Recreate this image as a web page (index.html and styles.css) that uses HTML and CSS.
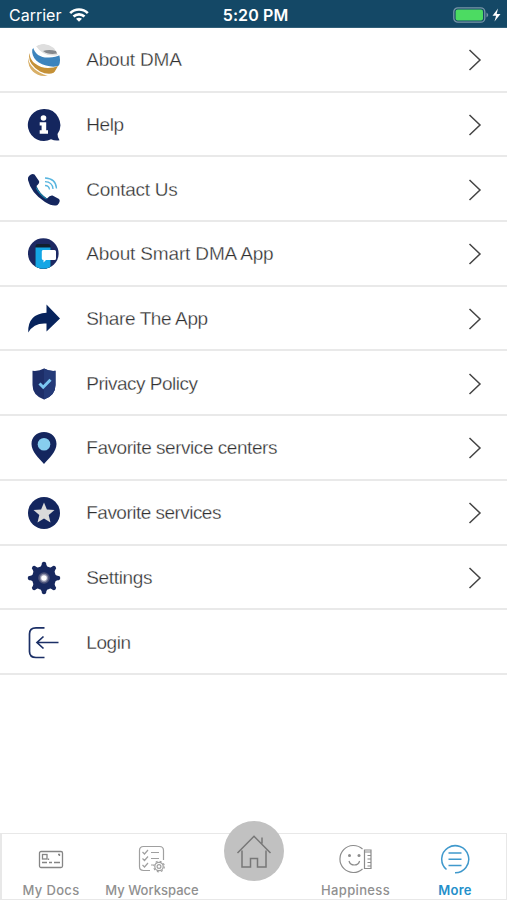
FILE: index.html
```html
<!DOCTYPE html>
<html lang="en">
<head>
<meta charset="utf-8">
<title>More</title>
<link rel="stylesheet" href="styles.css">
</head>
<body>
<svg class="defs" width="0" height="0" aria-hidden="true"><symbol id="chev" viewBox="0 0 14 22"><path d="M1.500 1 12 11 1.500 21" fill="none" stroke="#444" stroke-width="1.500"/></symbol></svg>
<div class="app">
  <header class="status">
    <div class="carrier"><span>Carrier</span>
      <svg width="20" height="14" viewBox="0 0 20 14" fill="none" stroke="#fff" stroke-width="2.700"><path d="M1.200 5.100C6.200.3 13.800.3 18.800 5.100M4.500 8.500C7.600 5.600 12.400 5.600 15.500 8.500"/><path d="M7 10.800Q10 8.600 13 10.800L10 13.700Z" fill="#fff" stroke="none"/></svg>
    </div>
    <div class="time">5:20 PM</div>
    <svg class="battery" width="49" height="16" viewBox="0 0 49 16"><rect x=".8" y=".8" width="31" height="14.400" rx="4" fill="none" stroke="#7896a8" stroke-width="1.300"/><rect x="2.600" y="2.600" width="27.400" height="10.800" rx="2" fill="#4cdb62"/><path d="M33.500 5.500Q37 8 33.500 10.500Z" fill="#7896a8"/><path d="M45 1.500 39.500 8.800h3.600L41.500 14.500 47.500 6.900h-3.800Z" fill="#fff"/></svg>
  </header>
  <main class="menu">
    <div class="row">
      <svg class="icon" viewBox="0 0 34 34"><defs><clipPath id="globe"><circle cx="17" cy="17" r="16"/></clipPath></defs><g clip-path="url(#globe)"><path d="M9 3Q17-2 27 5L31 12Q17 15 9 3Z" fill="#dedede"/><path d="M16 8Q22 6 29 8L30 10.500Q21 12 16 8Z" fill="#85888d"/><path d="M6 3C7 12 15 15 22 14.500Q29 14 33 12L33 22Q28 25 19 22.500C8 19.500 3 12 6 3Z" fill="#3d84bd"/><path d="M3 9Q2 16 8 20.500 14 25 21 25 27 25 31 23L27 30Q20 32 13 28.500-1 20 3 9Z" fill="#c59137"/><path d="M1 15Q3 27 21 33L14 34Q0 30 1 15Z" fill="#d9b068"/></g></svg>
      <span class="label l1">About DMA</span><svg class="chev"><use href="#chev"/></svg>
    </div>
    <div class="row">
      <svg class="icon" viewBox="0 0 34 34"><path d="M17 1A16 16 0 1 0 24 31.300Q28 33 32.500 32.300 30.500 29.500 30.500 26A16 16 0 0 0 17 1Z" fill="#14265e"/><circle cx="16.500" cy="10" r="2.800" fill="#fff"/><path d="M12.700 14.300H19.200V22.300H21V25.700H12.700V22.300H14.600V17.500H12.700Z" fill="#fff"/></svg>
      <span class="label l2">Help</span><svg class="chev"><use href="#chev"/></svg>
    </div>
    <div class="row">
      <svg class="icon" viewBox="0 0 34 34"><path d="M2 3Q5 0 7.500 1.500L12 8Q13 10 9.500 13 12 20 20 25.500 23 22 25.500 22.500L32 26Q34 28 30.500 32 26 34 18 29 4 20 1 7 .5 4.500 2 3Z" fill="#14265e"/><path d="M9.200 14.500Q12 21 19.500 26" fill="none" stroke="#1680a5" stroke-width="1.200"/><g fill="none" stroke="#58b5df" stroke-width="1.300"><path d="M18 12.500Q22 12.500 22.500 16.500"/><path d="M18 8.700Q25.500 9 26 16"/><path d="M18 5Q29 5.500 29.500 15.500"/></g></svg>
      <span class="label l3">Contact Us</span><svg class="chev"><use href="#chev"/></svg>
    </div>
    <div class="row">
      <svg class="icon" viewBox="0 0 34 34"><defs><clipPath id="app"><circle cx="16.300" cy="16.500" r="15.300"/></clipPath></defs><g clip-path="url(#app)"><path d="M0 0H34V34H0Z" fill="#1c2963"/><path d="M8.500 9Q8.500 7 11 7H21Q23.500 7 23.500 9V34H8.500Z" fill="#11202e"/><path d="M8.500 10.500H23.500V34H8.500Z" fill="#14a6e5"/></g><path d="M16 13H27.500Q29 13 29 14.500V21.500Q29 23 27.500 23H19L16.500 25.500V23Q14.800 23 14.800 21.500V14.500Q14.800 13 16 13Z" fill="#fff"/></svg>
      <span class="label l4">About Smart DMA App</span><svg class="chev"><use href="#chev"/></svg>
    </div>
    <div class="row">
      <svg class="icon" viewBox="0 0 34 34"><path d="M1.200 30.500Q.5 12 19.500 10.800V2.500L33 16.500 19.500 29.500V21.500Q7 20.500 1.200 30.500Z" fill="#07235c"/></svg>
      <span class="label l5">Share The App</span><svg class="chev"><use href="#chev"/></svg>
    </div>
    <div class="row">
      <svg class="icon" viewBox="0 0 34 34"><path d="M17 1.500Q22 4.500 28.500 3.800V18Q28.500 28.500 17 32.500 5.500 28.500 5.500 18V3.800Q12 4.500 17 1.500Z" fill="#1d2e69"/><path d="M17 1.500Q22 4.500 28.500 3.800V18Q28.500 28.500 17 32.500Z" fill="#243a78"/><path d="M12.500 16.500 16.200 20.200 23.500 12.800" fill="none" stroke="#7cc8f3" stroke-width="3"/></svg>
      <span class="label l6">Privacy Policy</span><svg class="chev"><use href="#chev"/></svg>
    </div>
    <div class="row">
      <svg class="icon" viewBox="0 0 34 34"><path d="M17 1C9.500 1 4.500 6.200 4.500 13 4.500 20.500 12 27.500 17 33 22 27.500 29.500 20.500 29.500 13 29.500 6.200 24.500 1 17 1Z" fill="#14265e"/><circle cx="17" cy="13.300" r="6.300" fill="#87ceef"/></svg>
      <span class="label l7">Favorite service centers</span><svg class="chev"><use href="#chev"/></svg>
    </div>
    <div class="row">
      <svg class="icon" viewBox="0 0 34 34"><circle cx="17" cy="17" r="16" fill="#14265e"/><path d="M17 6.500 19.900 13.500 27.500 14.100 21.700 19 23.500 26.400 17 22.400 10.500 26.400 12.300 19 6.500 14.100 14.100 13.500Z" fill="#dadada"/></svg>
      <span class="label l8">Favorite services</span><svg class="chev"><use href="#chev"/></svg>
    </div>
    <div class="row">
      <svg class="icon" viewBox="0 0 34 34"><circle cx="17" cy="17" r="12" fill="#17285f"/><g fill="#17285f"><path id="teeth" d="M11 8Q14.500 6 14.700 3.500 14.700.8 17 .8T19.300 3.500Q19.500 6 23 8ZM11 26Q14.500 28 14.700 30.500 14.700 33.200 17 33.200T19.300 30.500Q19.500 28 23 26Z"/><use href="#teeth" transform="rotate(45 17 17)"/><use href="#teeth" transform="rotate(90 17 17)"/><use href="#teeth" transform="rotate(135 17 17)"/></g><circle cx="17" cy="17" r="5.800" fill="#4b5279"/><circle cx="17" cy="17" r="4.200" fill="#8e91ab"/><circle cx="17" cy="17" r="2.800" fill="#fff"/></svg>
      <span class="label l9">Settings</span><svg class="chev"><use href="#chev"/></svg>
    </div>
    <div class="row">
      <svg class="icon" viewBox="0 0 34 34" fill="none" stroke="#1b2f66" stroke-width="1.700"><path d="M17.500 1.800H9Q2.500 1.800 2.500 8V25.500Q2.500 31.500 9 31.500H17.500M31.500 16.500H10.500M16.500 10.500 10 16.500 16.500 22.500"/></svg>
      <span class="label l10">Login</span>
    </div>
  </main>
  <nav class="tabs">
    <div class="tab docs">
      <svg width="30" height="30" viewBox="0 0 30 30" fill="none" stroke="#858585" stroke-width="1.300"><rect x="3.500" y="7.500" width="23" height="16" rx="1.500"/><rect x="6.500" y="10.500" width="4.500" height="4.500"/><path d="M6 18.500H11M13 18.500H16M18 18.500H24M12.500 14.500V16M22 10.500H23.500V12"/></svg>
      <span>My Docs</span>
    </div>
    <div class="tab work">
      <svg width="30" height="30" viewBox="0 0 30 30" fill="none" stroke="#a0a0a0" stroke-width="1.200"><path d="M13 26.500H6.500Q2.500 26.500 2.500 22.500V6.500Q2.500 2.500 6.500 2.500H22.500Q26.500 2.500 26.500 6.500V16M5.500 8 7.500 10 11 6M5.500 14.500 7.500 16.500 11 12.500M5.500 21 7.500 23 11 19M14 8.500H22M14 14.500H22M14 21H16"/><circle cx="22" cy="22.500" r="4.200"/><circle cx="22" cy="22.500" r="1.900"/><circle cx="22" cy="22.500" r="5.300" stroke-dasharray="2 2.163"/></svg>
      <span>My Workspace</span>
    </div>
    <div class="home"><svg width="38" height="38" viewBox="0 0 38 38" fill="none" stroke="#777" stroke-width="1.500"><path d="M2.500 21 19 4.200 35.500 21M7 18.500V35H15.500V26.500H22.500V35H31V18.500M27 5.500V11.500"/></svg></div>
    <div class="tab happy">
      <svg width="34" height="30" viewBox="0 0 34 30" fill="none" stroke="#8c8c8c" stroke-width="1.200"><path d="M23.500 5A13.500 13.500 0 1 0 23.500 25M10 17Q11 21 15.300 21T20.600 17"/><path d="M25.500 6H32V24.500H25.500ZM25.500 8H32M28.500 11.500H32M28.500 15H32M28.500 18.500H32M28.500 22H32"/><g fill="#8c8c8c" stroke="none"><circle cx="10.500" cy="11.500" r="1.500"/><circle cx="20" cy="11.500" r="1.500"/></g></svg>
      <span>Happiness</span>
    </div>
    <div class="tab more">
      <svg width="30" height="30" viewBox="0 0 30 30" fill="none" stroke="#4099cc" stroke-width="1.500"><path d="M6.500 25.500A13.500 13.500 0 1 1 15 28.700M8.500 9H21.500M8.500 15.200H21.500M8.500 21.500H21.500"/></svg>
      <span>More</span>
    </div>
  </nav>
</div>
</body>
</html>
```
FILE: styles.css
```css
* { box-sizing: border-box; }
body { margin: 0; background: #fff; }
.defs { position: absolute; }
.app { width: 507px; height: 900px; display: flex; flex-direction: column; overflow: hidden; }
.status { height: 28px; flex: none; display: grid; grid-template-columns: 1fr auto 1fr; align-items: center; padding: 2px 5px 0 9px; background: #144866; color: #fff; font: 16px/20px Inter, sans-serif; border-bottom: 1px solid #315f79; }
.carrier { display: flex; align-items: center; gap: 7px; }
.carrier span { width: 53px; }
.time { font-weight: 600; letter-spacing: .1px; }
.battery { justify-self: end; }
.menu { flex: none; }
.row { height: 64.7px; display: flex; align-items: center; padding: 2px 25px 0 26.7px; border-bottom: 2px solid #e9e9e9; }
.icon { width: 34px; height: 34px; flex: none; }
.label { margin-left: 25.6px; flex: 1; white-space: nowrap; color: #303030; font: 19px/26px "Liberation Sans", Arial, sans-serif; -webkit-text-stroke: .3px #fff; }
.l1 { letter-spacing: -.2px; }
.l2 { letter-spacing: -.45px; }
.l3 { letter-spacing: -.28px; }
.l4 { letter-spacing: -.15px; }
.l5 { letter-spacing: -.38px; }
.l6 { letter-spacing: -.5px; }
.l7 { letter-spacing: -.46px; }
.l8 { letter-spacing: -.53px; }
.l9 { letter-spacing: -.36px; }
.l10 { letter-spacing: -.45px; }
.chev { width: 14px; height: 22px; flex: none; }
.tabs { height: 67px; margin-top: auto; display: grid; grid-template-columns: 98px 104px 103px 97px 102px; border: 1px solid #e8e8e8; border-left-width: 2px; }
.tab { display: flex; flex-direction: column; align-items: center; padding-top: 10px; color: #909090; font: 500 13px/16px Inter, sans-serif; white-space: nowrap; }
.tab span { margin-top: 8px; letter-spacing: .35px; }
.work span { letter-spacing: .02px; }
.home { width: 60px; height: 60px; border-radius: 50%; background: #c1c1c1; margin: -13px 0 0 20px; display: grid; place-items: center; }
.more { color: #238fca; }
.more span { font-weight: 600; letter-spacing: .2px; }
```
